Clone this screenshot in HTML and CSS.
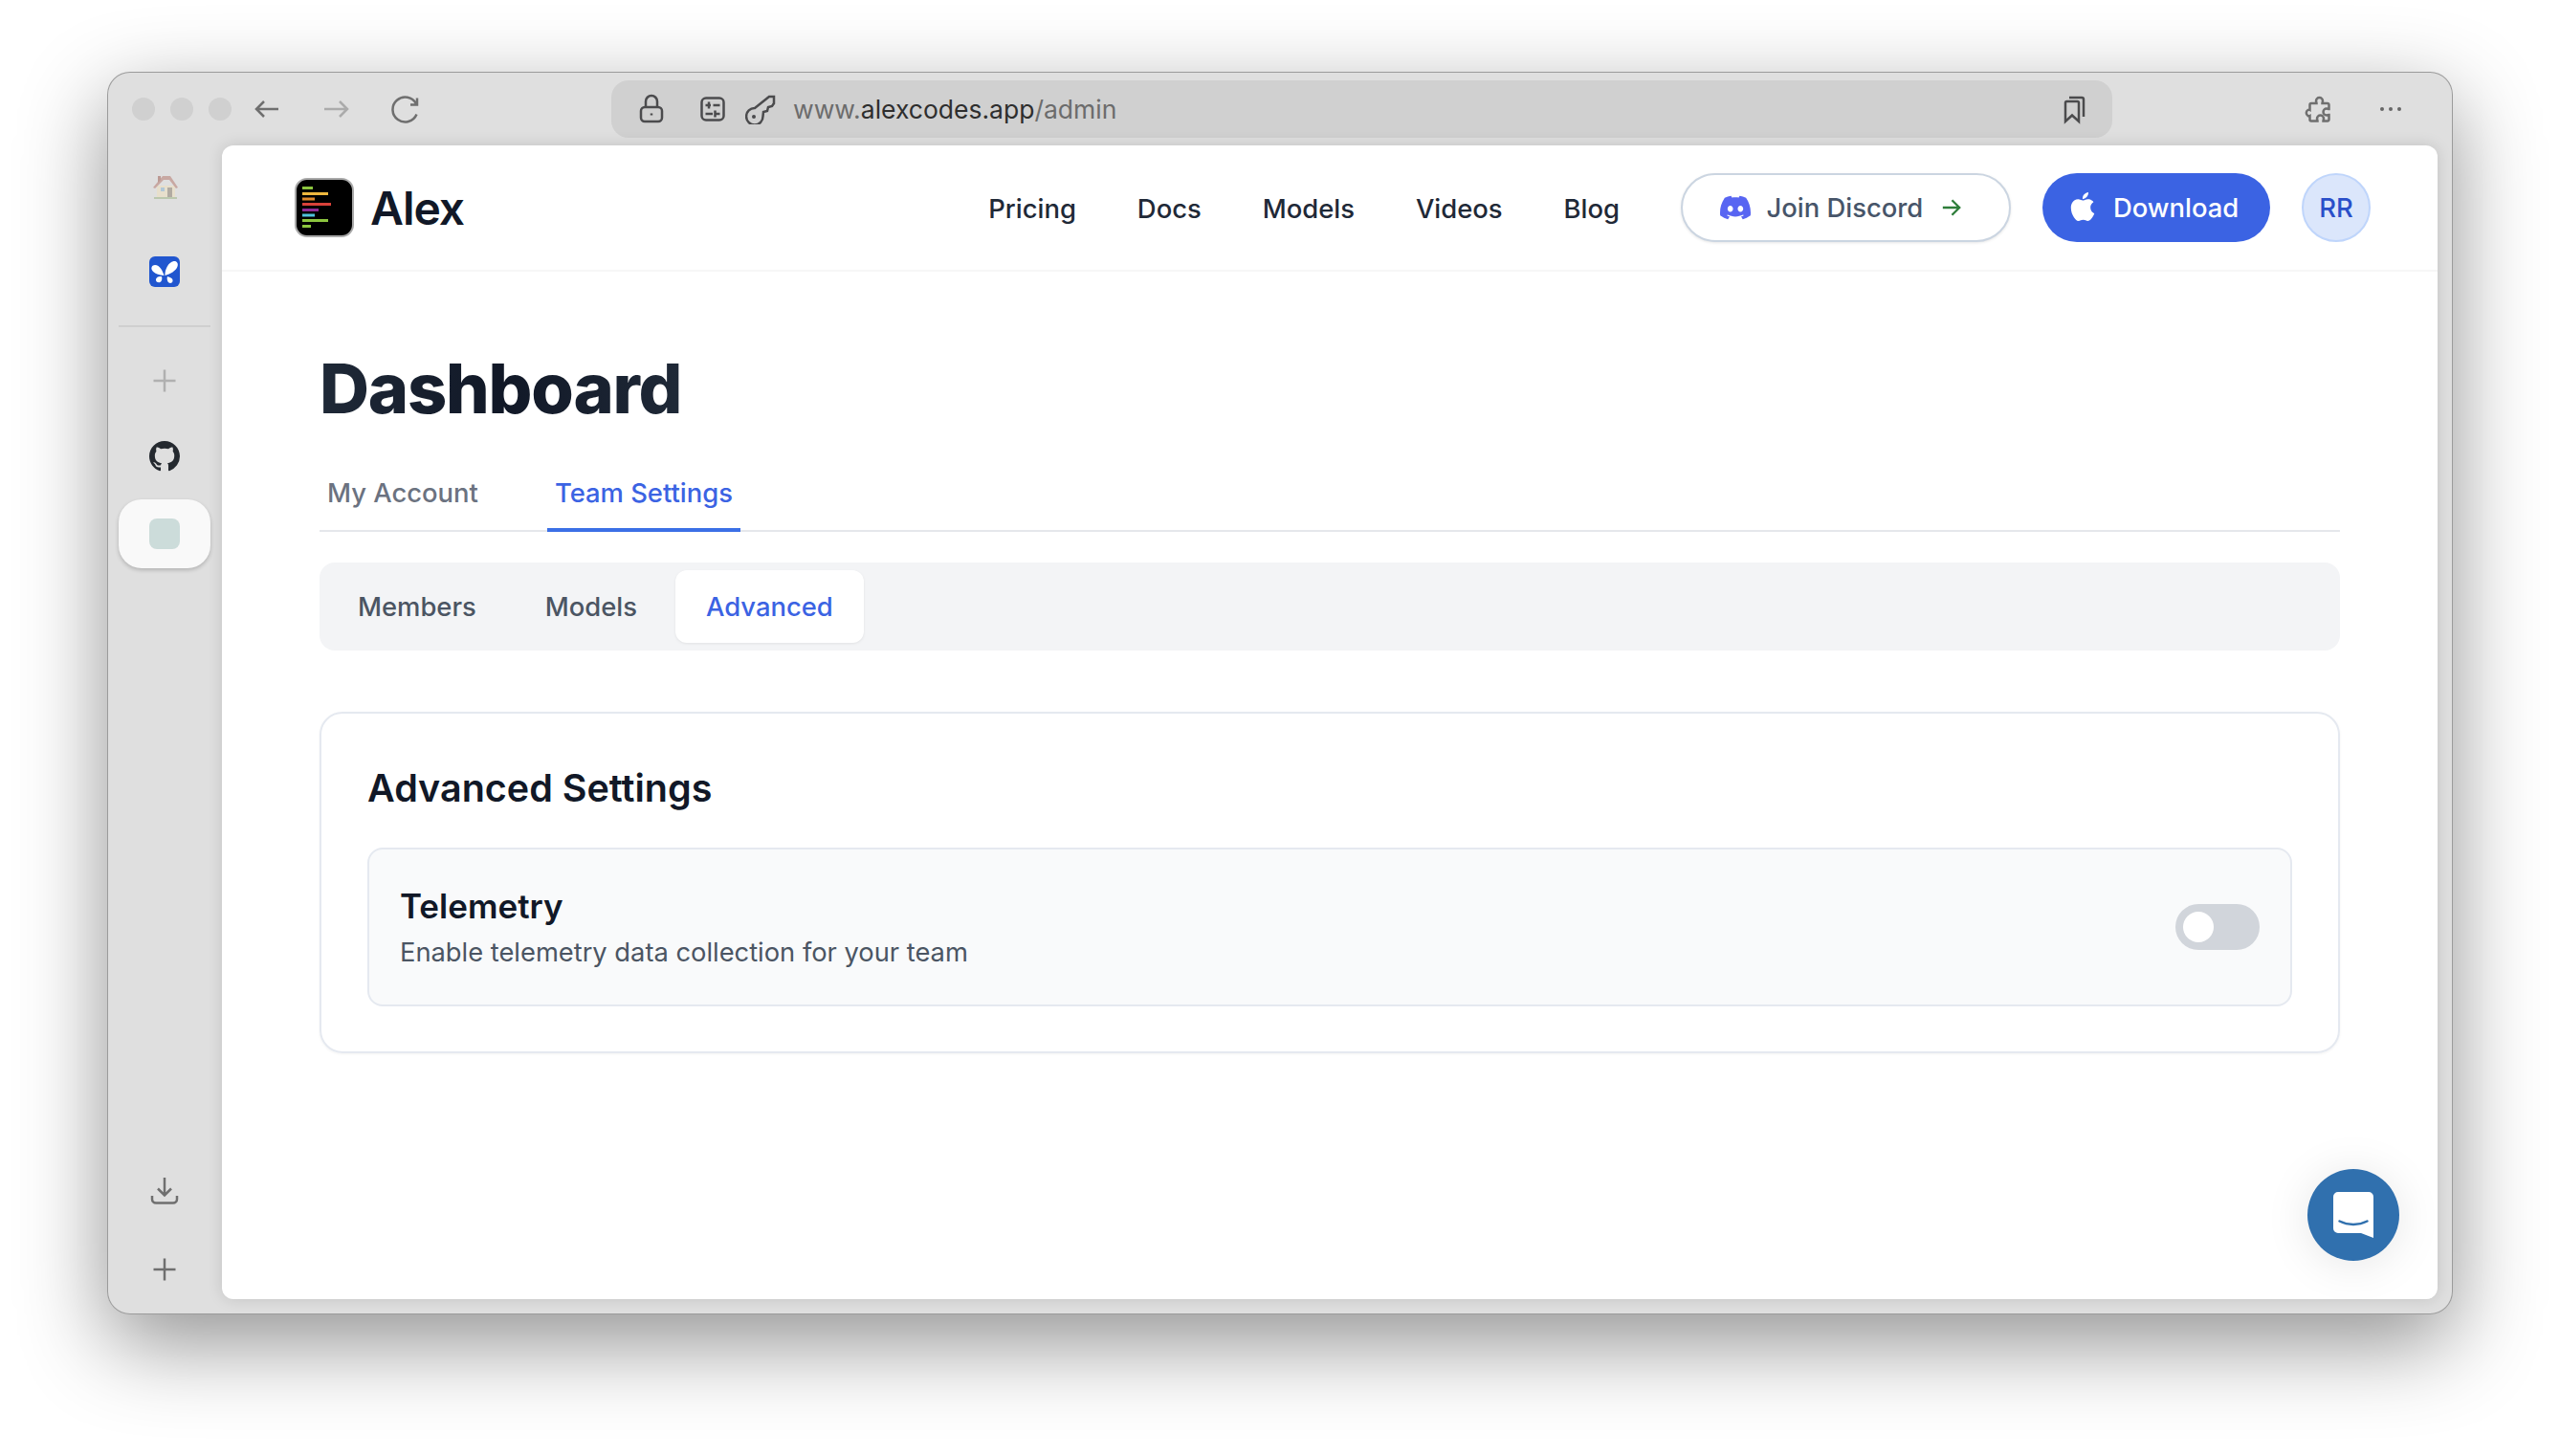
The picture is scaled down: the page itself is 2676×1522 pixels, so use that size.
FILE: index.html
```html
<!DOCTYPE html>
<html lang="en">
<head>
<meta charset="utf-8" />
<title>Alex - Dashboard</title>
<link rel="stylesheet" href="styles.css">
</head>
<body>
<div class="window">

	<!-- browser toolbar -->
	<div class="toolbar">
		<div class="lights"><span></span><span></span><span></span></div>
		<svg class="tool tool-first" viewBox="0 0 32 32"><path d="M28 16H5M13 8l-8 8 8 8"/></svg>
		<svg class="tool tool-dim" viewBox="0 0 32 32"><path d="M4 16h24M20 8l8 8-8 8"/></svg>
		<svg class="tool" viewBox="0 0 32 32"><path d="M28 10.500A13 13 0 1 0 28.500 21.500M29 4.500v7h-7"/></svg>

		<div class="address">
			<svg class="addr-icon" viewBox="0 0 32 32"><rect x="6" y="14" width="22" height="15" rx="4"/><path d="M11 14V8a6 6 0 0 1 12 0v6M17 20.500v2"/></svg>
			<svg class="addr-icon addr-sliders" viewBox="0 0 32 32"><rect x="4.500" y="4.500" width="23" height="23" rx="4.500"/><path d="M8.500 12H14M12 8.500v7M16.500 12h7M8.500 21H16M18.500 17.500v7M18.500 21h5"/></svg>
			<svg class="addr-icon addr-key" viewBox="0 0 32 32"><path d="M10 15A8.700 8.700 0 1 0 18.500 23.500L19 19l4-1 1-4 4-1 2-3V3h-5z"/><path d="M9 24h.01" stroke-width="4" stroke-linecap="round"/></svg>
			<div class="url">www.<b>alexcodes.app</b>/admin</div>
			<svg class="addr-icon" viewBox="0 0 32 32"><path d="M7 29V9.500a1.500 1.500 0 0 1 1.500-1.500h11a1.500 1.500 0 0 1 1.500 1.500V29l-7-6.500zM11 4h13a2 2 0 0 1 2 2v18"/></svg>
		</div>

		<svg class="tool tool-puzzle" viewBox="0 0 32 32"><path d="M13 7.500a3.500 3.500 0 0 1 7 0c0 1-.5 1.500-.5 2.500h5.500a1.500 1.500 0 0 1 1.500 1.500v4.500c-1 0-1.500-.5-2.500-.5a3.500 3.500 0 0 0 0 7c1 0 1.500-.5 2.500-.5V27a1.500 1.500 0 0 1-1.500 1.500h-4.500c0-1 .5-1.500.5-2.500a3.500 3.500 0 0 0-7 0c0 1 .5 1.500.5 2.500H8A1.500 1.500 0 0 1 6.500 27v-4c-1 .5-1.500.5-2 0a3.500 3.500 0 0 1 0-6c.5-.5 1-.5 2 0v-5.500A1.500 1.500 0 0 1 8 10h5.500c0-1-.5-1.500-.5-2.500z"/></svg>
		<div class="more"><span></span><span></span><span></span></div>
	</div>

	<div class="body">

		<!-- browser sidebar -->
		<div class="sidebar">
			<svg class="slot slot-house" viewBox="0 0 48 48">
				<path d="M16 23h19v12H16z" fill="#e9dfc9"/>
				<path d="M12 25l10-12h8l8 12-2 1-7-9-6 0-9 9z" fill="#c59f98"/>
				<path d="M17 13h3v4l-3 3z" fill="#b78f88"/>
				<rect x="20" y="25" width="4" height="4" fill="#a9c3d6"/>
				<rect x="27" y="25" width="5" height="10" fill="#a9a398"/>
				<path d="M13 36h24" stroke="#b5c4a6" stroke-width="2"/>
			</svg>
			<svg class="slot slot-app" viewBox="0 0 48 48">
				<rect x="8" y="9" width="32" height="32" rx="6" fill="#2156cf"/>
				<path fill="#fff" d="M23.500 29C22 24 19 18 14 18 11 18 9.500 21 11 23.500 13 27 19 28.500 23.500 29z"/>
				<path fill="#fff" d="M24.500 29C24 23 28 15 33.500 14 37 13.500 38.500 16.500 37.500 19.500 36 24 30 27.500 24.500 29z"/>
				<path fill="#fff" d="M21 30C18 29.500 14.500 31 15 34 15.500 36.500 19 37 20.500 35 21.500 33.500 21.500 31.500 21 30z"/>
				<path fill="#fff" d="M27 30C30 31 33 32 32.500 35 32 37.500 28.500 37.500 27.500 35.500 26.500 33.500 26.500 31.500 27 30z"/>
			</svg>
			<div class="side-line"></div>
			<svg class="slot slot-plus slot-dim" viewBox="0 0 48 48"><path d="M24 12.500v23M12.500 24h23"/></svg>
			<svg class="slot slot-git" viewBox="-4 -4 24 24"><path fill="#24292f" d="M8 0C3.580 0 0 3.580 0 8c0 3.540 2.290 6.530 5.470 7.590.4.07.55-.17.55-.38 0-.19-.01-.82-.01-1.490-2.010.37-2.530-.49-2.690-.94-.09-.23-.48-.94-.82-1.130-.28-.15-.68-.52-.01-.53.63-.01 1.080.58 1.230.82.72 1.210 1.870.87 2.330.66.07-.52.28-.87.51-1.070-1.780-.2-3.640-.89-3.640-3.950 0-.87.31-1.590.82-2.150-.08-.2-.36-1.020.08-2.120 0 0 .67-.21 2.200.82.64-.18 1.320-.27 2-.27.68 0 1.360.09 2 .27 1.530-1.040 2.200-.82 2.200-.82.44 1.100.16 1.920.08 2.120.51.56.82 1.270.82 2.150 0 3.070-1.870 3.750-3.650 3.950.29.25.54.73.54 1.480 0 1.070-.01 1.930-.01 2.200 0 .21.15.46.55.38A8.013 8.013 0 0 0 16 8c0-4.420-3.580-8-8-8z"/></svg>
			<div class="side-tile"><span></span></div>
			<div class="side-fill"></div>
			<svg class="slot slot-down" viewBox="0 0 48 48"><path d="M24 10v18M17 21.500l7 7 7-7M11 29v3.500a4 4 0 0 0 4 4h18a4 4 0 0 0 4-4V29"/></svg>
			<svg class="slot slot-plus slot-last" viewBox="0 0 48 48"><path d="M24 12.500v23M12.500 24h23"/></svg>
		</div>

		<!-- page -->
		<div class="page">
			<div class="site-head">
				<div class="brand">
					<svg class="brand-logo" viewBox="0 0 62 62">
						<rect x="1" y="1" width="60" height="60" rx="12" fill="#000" stroke="#a9a9a9" stroke-width="2"/>
						<rect x="8" y="9" width="11" height="3" fill="#8cc63f"/>
						<rect x="8" y="15" width="27" height="3" fill="#efb73e"/>
						<rect x="8" y="20.500" width="13" height="3" fill="#e08a2c"/>
						<rect x="8" y="26" width="30" height="3" fill="#d9423a"/>
						<rect x="8" y="32" width="17" height="3" fill="#8e2b96"/>
						<rect x="8" y="37.500" width="13" height="3" fill="#4fc1dc"/>
						<rect x="8" y="43" width="27" height="3" fill="#8cc63f"/>
						<rect x="8" y="49" width="9" height="3" fill="#8cc63f"/>
					</svg>
					<span class="brand-name">Alex</span>
				</div>
				<div class="site-nav">
					<a>Pricing</a>
					<a>Docs</a>
					<a>Models</a>
					<a>Videos</a>
					<a>Blog</a>
				</div>
				<div class="btn-discord">
					<svg class="discord-icon" viewBox="0 0 24 24"><path fill="#5865f2" d="M20.317 4.370a19.791 19.791 0 0 0-4.885-1.515.074.074 0 0 0-.079.037c-.211.375-.445.865-.608 1.250-1.845-.276-3.680-.276-5.487 0-.164-.393-.406-.874-.618-1.250a.077.077 0 0 0-.079-.037 19.736 19.736 0 0 0-4.885 1.515.07.07 0 0 0-.032.028C.533 9.046-.319 13.580.099 18.058a.082.082 0 0 0 .031.056c2.053 1.508 4.041 2.423 5.993 3.029a.078.078 0 0 0 .084-.028c.462-.630.873-1.295 1.226-1.994a.076.076 0 0 0-.042-.106c-.653-.248-1.274-.549-1.872-.892a.077.077 0 0 1-.008-.128c.126-.094.252-.192.372-.291a.074.074 0 0 1 .078-.011c3.928 1.793 8.180 1.793 12.061 0a.074.074 0 0 1 .079.010c.120.099.246.198.373.292a.077.077 0 0 1-.007.128 12.299 12.299 0 0 1-1.873.891.077.077 0 0 0-.041.107c.360.698.772 1.363 1.225 1.993a.076.076 0 0 0 .084.029c1.961-.607 3.950-1.522 6.002-3.029a.077.077 0 0 0 .031-.055c.500-5.177-.838-9.674-3.549-13.660a.061.061 0 0 0-.031-.029zM8.020 15.331c-1.183 0-2.157-1.086-2.157-2.419 0-1.333.956-2.419 2.157-2.419 1.211 0 2.176 1.095 2.157 2.419 0 1.333-.956 2.419-2.157 2.419zm7.975 0c-1.183 0-2.157-1.086-2.157-2.419 0-1.333.955-2.419 2.157-2.419 1.211 0 2.176 1.095 2.157 2.419 0 1.333-.946 2.419-2.157 2.419z"/></svg>
					<span>Join Discord</span>
					<svg class="discord-arrow" viewBox="0 0 24 24"><path d="M2 12h19M12.500 3.500l8.500 8.500-8.500 8.500"/></svg>
				</div>
				<div class="btn-download">
					<svg class="apple-icon" viewBox="0 0 24 24"><path fill="#fff" d="M12.152 6.896c-.948 0-2.415-1.078-3.960-1.040-2.040.027-3.910 1.183-4.961 3.014-2.117 3.675-.546 9.103 1.519 12.090 1.013 1.454 2.208 3.090 3.792 3.039 1.520-.065 2.090-.987 3.935-.987 1.831 0 2.350.987 3.960.948 1.637-.026 2.676-1.480 3.676-2.948 1.156-1.688 1.636-3.325 1.662-3.415-.039-.013-3.182-1.221-3.220-4.857-.026-3.040 2.480-4.494 2.597-4.559-1.429-2.090-3.623-2.324-4.390-2.376-2-.156-3.675 1.090-4.610 1.090zM15.530 3.830c.843-1.012 1.400-2.427 1.245-3.830-1.207.052-2.662.805-3.532 1.818-.780.896-1.454 2.338-1.273 3.714 1.338.104 2.715-.688 3.559-1.701"/></svg>
					<span>Download</span>
				</div>
				<div class="avatar">RR</div>
			</div>

			<div class="main">
				<h1 class="title">Dashboard</h1>

				<div class="tabs">
					<div class="tab">My Account</div>
					<div class="tab tab-on">Team Settings</div>
				</div>

				<div class="subtabs">
					<div class="subtab">Members</div>
					<div class="subtab">Models</div>
					<div class="subtab subtab-on">Advanced</div>
				</div>

				<div class="card">
					<h2 class="card-title">Advanced Settings</h2>
					<div class="setting">
						<div>
							<div class="setting-name">Telemetry</div>
							<div class="setting-desc">Enable telemetry data collection for your team</div>
						</div>
						<div class="toggle"><span></span></div>
					</div>
				</div>
			</div>

			<div class="chat">
				<svg viewBox="0 0 42 48"><path fill="#fff" d="M5 0h32a5 5 0 0 1 5 5v43l-13-5H5a5 5 0 0 1-5-5V5a5 5 0 0 1 5-5z"/><path d="M6.500 30.500c9 4.500 20 4.500 29 0" fill="none" stroke="#3070ae" stroke-width="2.500" stroke-linecap="round"/></svg>
			</div>
		</div>
	</div>
</div>
</body>
</html>
```

FILE: styles.css
```css
html, body { height: 100%; }

body {
	margin: 0;
	padding: 75px 112px 0;
	box-sizing: border-box;
	background: #fff;
	font-family: Inter, "Liberation Sans", sans-serif;
	overflow: hidden;
}

.window {
	height: 1299px;
	display: flex;
	flex-direction: column;
	background: #dfdfdf;
	border-radius: 24px;
	box-shadow: inset 0 0 0 1px rgba(0,0,0,.3), 0 30px 90px rgba(0,0,0,.43);
}

/* toolbar */

.toolbar {
	height: 77px;
	flex: none;
	display: flex;
	align-items: center;
	padding: 0 48px 0 26px;
	box-sizing: border-box;
}

.lights { display: flex; gap: 16px; margin-right: 21px; }

.lights span {
	width: 24px;
	height: 24px;
	border-radius: 50%;
	background: #d0d0d0;
}

.tool {
	width: 32px;
	height: 32px;
	flex: none;
	fill: none;
	stroke: #6f6f6f;
	stroke-width: 2.5;
}

.tool + .tool { margin-left: 40px; }
.tool-first { margin-left: 0; }
.tool-dim { stroke: #ababab; }

.address {
	width: 1569px;
	height: 60px;
	margin: 0 0 0 200px;
	padding: 0 24px 0 25px;
	box-sizing: border-box;
	display: flex;
	align-items: center;
	flex: none;
	background: #d0d0d0;
	border-radius: 18px;
}

.addr-icon {
	width: 32px;
	height: 32px;
	flex: none;
	fill: none;
	stroke: #4b4b4d;
	stroke-width: 2.5;
}

.addr-sliders { margin-left: 33px; }
.addr-key { margin-left: 18px; }

.url {
	flex: 1;
	margin-left: 18px;
	font-size: 26.5px;
	color: #6c6c6c;
}

.url b { font-weight: 400; color: #2e2e2e; }

.tool-puzzle { margin-left: 200px; }

.more { display: flex; gap: 5px; margin-left: 48px; }

.more span {
	width: 4px;
	height: 4px;
	border-radius: 50%;
	background: #666;
}

/* sidebar */

.body { flex: 1; display: flex; min-height: 0; }

.sidebar {
	width: 120px;
	flex: none;
	display: flex;
	flex-direction: column;
	align-items: center;
	padding: 19px 0 23px;
	box-sizing: border-box;
}

.slot {
	width: 48px;
	height: 48px;
	flex: none;
	fill: none;
	stroke: #6f6f6f;
	stroke-width: 2.500;
}

.slot-house, .slot-app, .slot-git { stroke: none; }
.slot-house { opacity: .85; }
.slot-app { margin-top: 40px; }
.slot-dim { stroke: #b0b0b0; margin-top: 32px; }
.slot-git { margin-top: 31px; }
.slot-last { margin-top: 34px; }

.side-line {
	width: 96px;
	height: 2px;
	margin-top: 33px;
	background: #cfcfcf;
}

.side-tile {
	width: 96px;
	height: 72px;
	margin-top: 21px;
	flex: none;
	display: flex;
	align-items: center;
	justify-content: center;
	background: #f9f9f9;
	border-radius: 24px;
	box-shadow: 0 2px 4px rgba(0,0,0,.2);
}

.side-tile span {
	width: 32px;
	height: 32px;
	background: #ccdcda;
	border-radius: 8px;
}

.side-fill { flex: 1; }

/* page */

.page {
	flex: 1;
	position: relative;
	margin: 0 16px 16px 0;
	background: #fff;
	border-radius: 12px;
	box-shadow: 0 0 16px rgba(0,0,0,.13);
}

.site-head {
	height: 130px;
	display: flex;
	align-items: center;
	padding: 0 70px 0 76px;
	border-bottom: 2px solid #f7f7f7;
}

.brand { display: flex; align-items: center; gap: 17px; }
.brand-logo { width: 62px; height: 62px; }

.brand-name {
	font-size: 48px;
	font-weight: 600;
	letter-spacing: -1px;
	color: #111827;
}

.site-nav {
	margin-left: auto;
	padding-top: 2px;
	display: flex;
	gap: 64px;
	font-size: 27.4px;
	font-weight: 500;
	color: #1f2937;
}

.btn-discord {
	width: 345px;
	height: 72px;
	box-sizing: border-box;
	margin-left: 64px;
	padding-left: 39px;
	display: flex;
	align-items: center;
	background: #fff;
	border: 2px solid #cbd5e1;
	border-radius: 36px;
	font-size: 27.4px;
	font-weight: 500;
	color: #475569;
	box-shadow: 0 1px 3px rgba(0,0,0,.1);
}

.discord-icon { width: 32px; height: 32px; margin-right: 16.5px; }

.discord-arrow {
	width: 22px;
	height: 22px;
	margin-left: 18.5px;
	fill: none;
	stroke: #2e7d3a;
	stroke-width: 2.500;
}

.btn-download {
	width: 238px;
	height: 72px;
	box-sizing: border-box;
	margin-left: 33px;
	padding-left: 27px;
	display: flex;
	align-items: center;
	background: #3b63e3;
	border-radius: 36px;
	font-size: 27.4px;
	font-weight: 500;
	color: #fff;
}

.apple-icon { width: 30px; height: 30px; margin: -3px 17px 0 0; }

.avatar {
	width: 72px;
	height: 72px;
	box-sizing: border-box;
	margin-left: 33px;
	display: flex;
	align-items: center;
	justify-content: center;
	background: #dbe6fb;
	border: 2px solid #bfd5fb;
	border-radius: 50%;
	font-size: 27.4px;
	font-weight: 500;
	color: #2a4fc9;
}

.main { padding: 82px 102px 0; }

.title {
	margin: 0 0 33px;
	font-size: 72px;
	line-height: 80px;
	font-weight: 800;
	letter-spacing: -1.2px;
	background: linear-gradient(to right, #1f2937, #111827 50%, #1f2937 100%);
	-webkit-background-clip: text;
	background-clip: text;
	color: transparent;
	width: 380px;
}

.tabs {
	display: flex;
	gap: 64px;
	height: 75px;
	border-bottom: 2px solid #e5e7eb;
}

.tab {
	height: 77px;
	box-sizing: border-box;
	padding: 18px 8px 0;
	font-size: 27.4px;
	line-height: 36px;
	font-weight: 500;
	color: #6b7280;
}

.tab-on {
	color: #3b63e3;
	border-bottom: 4px solid #3b6fe6;
}

.subtabs {
	margin-top: 32px;
	padding: 8px;
	display: flex;
	gap: 8px;
	background: #f3f4f6;
	border-radius: 16px;
}

.subtab {
	height: 76px;
	padding: 0 32px;
	display: flex;
	align-items: center;
	border-radius: 12px;
	font-size: 27.4px;
	font-weight: 500;
	color: #4b5563;
}

.subtab-on {
	background: #fff;
	color: #3b63e3;
	box-shadow: 0 1px 3px rgba(0,0,0,.08);
}

.card {
	margin-top: 64px;
	padding: 48px 48px 47px;
	border: 2px solid #e5e9f0;
	border-radius: 24px;
	box-shadow: 0 1px 3px rgba(0,0,0,.05);
}

.card-title {
	margin: 0 0 32px;
	font-size: 39.5px;
	line-height: 60px;
	font-weight: 600;
	color: #111827;
}

.setting {
	height: 166px;
	box-sizing: border-box;
	padding: 0 32px;
	display: flex;
	align-items: center;
	justify-content: space-between;
	background: #f9fafb;
	border: 2px solid #e5e9f0;
	border-radius: 16px;
}

.setting-name {
	font-size: 35px;
	line-height: 48px;
	font-weight: 600;
	color: #111827;
}

.setting-desc {
	font-size: 27.3px;
	line-height: 40px;
	margin-top: 5px;
	color: #4b5563;
}

.toggle {
	width: 88px;
	height: 48px;
	padding: 8px;
	box-sizing: border-box;
	background: #d1d5db;
	border-radius: 24px;
}

.toggle span {
	display: block;
	width: 32px;
	height: 32px;
	background: #fff;
	border-radius: 50%;
}

.chat {
	position: absolute;
	right: 40px;
	bottom: 40px;
	width: 96px;
	height: 96px;
	display: flex;
	align-items: center;
	justify-content: center;
	background: #3070ae;
	border-radius: 50%;
	box-shadow: 0 4px 48px rgba(0,0,0,.1);
}

.chat svg { width: 42px; height: 48px; }
```
